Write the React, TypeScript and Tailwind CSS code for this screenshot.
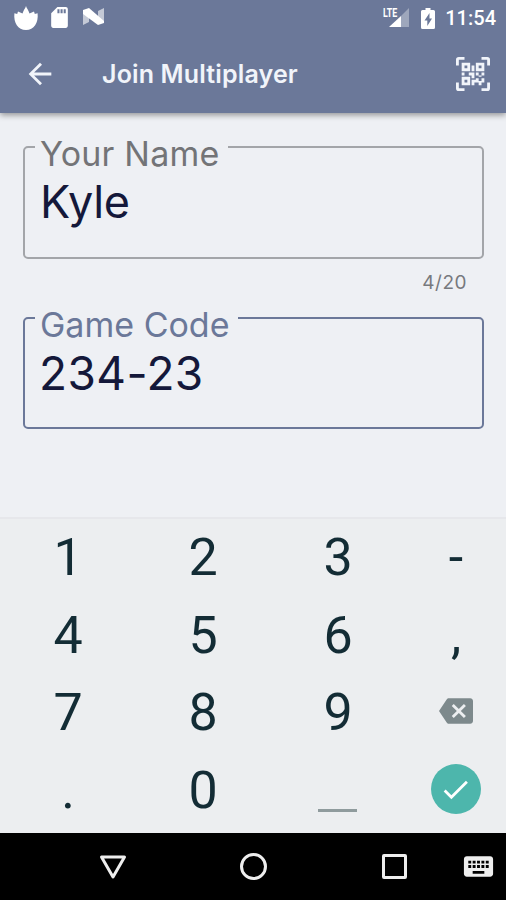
import React from "react"
import { MdArrowBack, MdBackspace, MdCheck, MdKeyboard, MdSdCard } from "react-icons/md"

const StatusBar: React.FC = () => {
  return (
    <div className="flex h-9 items-center pl-3 pr-[10px] text-white">
      <svg className="h-[26px] w-[28px]" viewBox="0 0 28 26" fill="currentColor">
        <path d="M14 1C14.6 3.5 16.5 5 17.5 8.4L22 6.5L22.8 9L25.6 8.2C26.6 18 22 25 14 25C6 25 1.4 18 2.4 8.2L5.2 9L6 6.5L10.5 8.4C11.5 5 13.4 3.5 14 1Z" />
      </svg>
      <MdSdCard className="mb-[2px] ml-[7px] size-[25px]" />
      <svg className="mb-[2px] ml-[11px] h-5 w-[22px]" viewBox="0 0 22 20" fill="currentColor">
        <path d="M0 3H6V15L0 18Z" opacity=".6" />
        <path d="M15 4L21 1V16H15Z" opacity=".6" />
        <path d="M0 3L6 1L21 14V16L15 18L0 7Z" />
      </svg>
      <div className="relative mb-[2px] ml-auto mr-px h-[22px] w-[26px]">
        <span className="absolute left-0 top-0 origin-left scale-x-[.68] font-[Roboto] text-[13px] font-bold leading-[13px]">
          LTE
        </span>
        <svg className="size-full" viewBox="0 0 26 22" fill="currentColor">
          <path d="M26 2V21H18V10Z" opacity=".35" />
          <path d="M18 10V21H6Z" />
        </svg>
      </div>
      <svg className="ml-[11px] mr-[5px] h-[21px] w-[14px]" viewBox="0 0 14 21" fill="currentColor">
        <path
          fillRule="evenodd"
          d="M4.5 0H9.5V2H12.5Q14 2 14 3.5V19.5Q14 21 12.5 21H1.5Q0 21 0 19.5V3.5Q0 2 1.5 2H4.5ZM8.5 5L3.5 12.5H6.3V18L11 10.5H8.5Z"
        />
      </svg>
      <span className="ml-[5px] font-[Roboto] text-[20px] font-medium leading-9">11:54</span>
    </div>
  )
}

const Header: React.FC = () => {
  return (
    <header className="relative h-[113px] bg-[#6b7899] shadow-[0_2px_6px_rgba(0,0,0,0.4)]">
      <StatusBar />
      <div className="flex h-[76px] items-center pl-[23px] pr-4 text-[#f1f4fa]">
        <MdArrowBack className="size-[34px]" />
        <h1 className="ml-[45px] pt-[2px] text-[25px] font-semibold tracking-[0.15px]">Join Multiplayer</h1>
        <svg className="ml-auto size-[34px]" viewBox="0 0 24 24" fill="currentColor">
          <path d="M4 4h6v6H4V4m16 0v6h-6V4h6m-6 11h2v-2h-2v-2h2v2h2v-2h2v2h-2v2h2v3h-2v2h-2v-2h-3v2h-2v-4h3v-2m2 0v3h2v-3h-2M4 20v-6h6v6H4M6 6v2h2V6H6m10 0v2h2V6h-2M6 16v2h2v-2H6m-2-5h2v2H4v-2m5 0h4v4h-2v-2H9v-2m2-5h2v4h-2V6M2 2v4H0V2a2 2 0 0 1 2-2h4v2H2m20-2a2 2 0 0 1 2 2v4h-2V2h-4V0h4M2 18v4h4v2H2a2 2 0 0 1-2-2v-4h2m20 4v-4h2v4a2 2 0 0 1-2 2h-4v-2h4z" />
        </svg>
      </div>
    </header>
  )
}

const Keypad: React.FC = () => {
  const keys = ["1", "2", "3", "-", "4", "5", "6", ",", "7", "8", "9", "back", ".", "0", "space", "done"]

  return (
    <div className="grid h-[316px] grid-cols-[135px_135px_135px_1fr] grid-rows-[77.5px_77.5px_77.5px_77.5px] border-t-2 border-[#e6e7eb] bg-[#eceef0] font-[Roboto] text-[52px] leading-none text-[#132c35]">
      {keys.map((key) => (
        <div key={key} className="flex items-center justify-center">
          {key === "back" && <MdBackspace className="mb-[3px] ml-px size-[34px] text-[#7d898c]" />}
          {key === "space" && <span className="mt-[41px] h-[3px] w-[39px] bg-[#8f9b9d]" />}
          {key === "done" && (
            <span className="mb-[2px] flex size-[50px] items-center justify-center rounded-full bg-[#4db6ac] text-white">
              <MdCheck className="size-[33px]" />
            </span>
          )}
          {key.length === 1 && <span className="pl-px pt-px">{key}</span>}
        </div>
      ))}
    </div>
  )
}

const NavBar: React.FC = () => {
  return (
    <div className="flex h-[67px] items-center bg-black pl-[98px] text-[#eee]">
      <svg className="h-[26px] w-[30px]" viewBox="0 0 30 26" fill="none" stroke="currentColor" strokeWidth="3" strokeLinejoin="round">
        <path d="M3.5 3H26.5L15 23Z" />
      </svg>
      <span className="ml-[112px] size-[27px] rounded-full border-3 border-[#eee]" />
      <span className="ml-[115px] size-[25px] rounded-xs border-3 border-[#eee]" />
      <MdKeyboard className="ml-[54px] size-[35px]" />
    </div>
  )
}

export default function App() {
  return (
    <div className="flex h-[900px] w-[506px] flex-col overflow-hidden bg-[#eef0f4] font-[Inter,sans-serif]">
      <Header />
      <main className="flex-1 pl-[23px] pr-[22px] pt-[9px]">
        <fieldset className="h-[137px] rounded-[5px] border-2 border-[#a3a5a9] pl-[10px]">
          <legend className="h-[50px] w-[193px] whitespace-nowrap pl-[5px] pt-[14px] text-[34px] leading-9 tracking-[0.2px] text-[#737477]">
            Your Name
          </legend>
          <div className="pl-[5px] text-[45px] leading-[60px] tracking-[-0.4px] text-[#14183a]">Kyle</div>
        </fieldset>
        <div className="h-[34px] pr-[17px] pt-[13px] text-right text-[19px] leading-[22px] tracking-[0.5px] text-[#77797e]">
          4/20
        </div>
        <fieldset className="h-[136px] rounded-[5px] border-[2.5px] border-[#6b7899] pl-[10px]">
          <legend className="h-[50px] w-[203px] whitespace-nowrap pl-[5px] pt-[14px] text-[34px] leading-9 text-[#6b7899]">
            Game Code
          </legend>
          <div className="pl-1 text-[46px] leading-[60px] tracking-[0.4px] text-[#14183a]">234-23</div>
        </fieldset>
      </main>
      <Keypad />
      <NavBar />
    </div>
  )
}
